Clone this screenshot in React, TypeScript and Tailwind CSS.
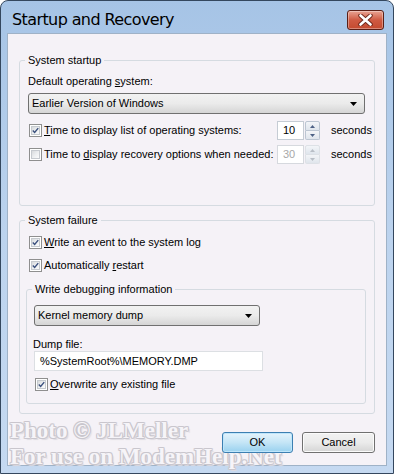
import React from "react";

const font = { fontFamily: '"Liberation Sans", Arial, sans-serif' };

function Check({ checked = false }: { checked?: boolean }) {
  return (
    <div className="w-[13px] h-[13px] border border-[#8f8f8f] bg-white p-[1px] shrink-0">
      <div className="w-full h-full bg-gradient-to-br from-[#d8dadc] via-[#eceef0] to-[#fbfbfb] border border-[#c6cacf] flex items-center justify-center">
        {checked && (
          <svg width="9" height="9" viewBox="0 0 9 9">
            <path d="M1 4.6 L3.4 7 L8 1.4" stroke="#3a4f7d" strokeWidth="1.8" fill="none" />
          </svg>
        )}
      </div>
    </div>
  );
}

function Combo({ text, w }: { text: string; w: string }) {
  return (
    <div className={`${w} h-[21px] rounded-[3px] border border-[#707070] bg-gradient-to-b from-[#f2f2f2] via-[#ebebeb] to-[#d5d5d5] flex items-center justify-between pl-[3px] pr-[7px]`}>
      <span className="text-[11px] text-black">{text}</span>
      <svg width="7" height="4" viewBox="0 0 7 4">
        <path d="M0 0 H7 L3.5 4 Z" fill="#000" />
      </svg>
    </div>
  );
}

function Spinner({ value, disabled = false }: { value: string; disabled?: boolean }) {
  const arrow = disabled ? "#b8bec6" : "#4d6185";
  return (
    <div className="flex h-[19px]">
      <div className={`w-[27px] h-full border ${disabled ? "border-[#d6d9de] text-[#a8a8a8]" : "border-[#c5ccd4] text-black"} bg-white text-[11px] flex items-center pl-[5px]`}>
        {value}
      </div>
      <div className="w-[15px] h-full flex flex-col ml-[1px]">
        <div className={`flex-1 border ${disabled ? "border-[#dde1e6]" : "border-[#bcc6d2]"} rounded-t-[2px] bg-gradient-to-b from-[#f3f5f8] to-[#dfe5ec] flex items-center justify-center`}>
          <svg width="5" height="3" viewBox="0 0 5 3"><path d="M0 3 H5 L2.5 0 Z" fill={arrow} /></svg>
        </div>
        <div className={`flex-1 border-x border-b ${disabled ? "border-[#dde1e6]" : "border-[#bcc6d2]"} rounded-b-[2px] bg-gradient-to-b from-[#f3f5f8] to-[#dfe5ec] flex items-center justify-center`}>
          <svg width="5" height="3" viewBox="0 0 5 3"><path d="M0 0 H5 L2.5 3 Z" fill={arrow} /></svg>
        </div>
      </div>
    </div>
  );
}

function Group({ label, className, children }: { label: string; className: string; children?: React.ReactNode }) {
  return (
    <div className={`relative border border-[#d5dbe1] rounded-[3px] ${className}`}>
      <span className="absolute -top-[8px] left-[5px] px-[3px] bg-[#f5f2f7] text-[11px] leading-[14px] text-black">{label}</span>
      {children}
    </div>
  );
}

export default function App() {
  const wmStyle: React.CSSProperties = {
    fontFamily: '"Liberation Serif", "Times New Roman", serif',
    color: "#f6f4f8",
    textShadow:
      "1px 0 0 #c9c6cd, -1px 0 0 #c9c6cd, 0 1px 0 #c9c6cd, 0 -1px 0 #c9c6cd, 1px 1px 0 #d4d1d8, -1px -1px 0 #d4d1d8, 1px -1px 0 #d4d1d8, -1px 1px 0 #d4d1d8, 2px 2px 1px #dedbe1",
  };
  return (
    <div className="w-[394px] h-[474px] bg-white" style={font}>
      <div className="relative w-[394px] h-[474px] rounded-t-[8px] border border-[#34475e] bg-gradient-to-b from-[#a6c4e6] via-[#bcd3ee] to-[#c5d9f1] flex flex-col">
        {/* Title bar */}
        <div className="h-[32px] flex items-start justify-between pl-[11px] pr-[9px]">
          <span className="mt-[9px] text-[16px] leading-[20px] text-black" style={{ fontFamily: '"DejaVu Sans", sans-serif', letterSpacing: "-0.6px" }}>
            Startup and Recovery
          </span>
          <div className="mt-[9px] w-[37px] h-[20px] rounded-[3px] border border-[#5b1f16] bg-gradient-to-b from-[#e8a393] via-[#cf5a42] to-[#c44a2f] flex items-center justify-center shadow-[inset_0_0_0_1px_rgba(255,255,255,0.35)]">
            <svg width="15" height="12" viewBox="0 0 15 12">
              <path d="M2.5 1.5 L12.5 10.5 M12.5 1.5 L2.5 10.5" stroke="#6a2418" strokeWidth="4.4" strokeLinecap="round" />
              <path d="M2.5 1.5 L12.5 10.5 M12.5 1.5 L2.5 10.5" stroke="#ffffff" strokeWidth="2.6" strokeLinecap="round" />
            </svg>
          </div>
        </div>

        {/* Content */}
        <div className="relative mx-[6px] h-[433px] border border-[#9fb2c7] bg-[#f5f2f7] flex flex-col text-[11px] text-black">
          {/* Watermark (behind controls) */}
          <div className="absolute left-[2px] top-[384px] pointer-events-none font-bold text-[23px] leading-[26px]" style={wmStyle}>
            <div>Photo © JLMeller</div>
            <div>For use on ModemHelp.Net</div>
          </div>

          {/* System startup */}
          <Group label="System startup" className="mt-[26px] ml-[11px] w-[356px] h-[146px] pl-[8px] pt-[13px] flex flex-col">
            <div className="leading-[14px]">Default operating <u>s</u>ystem:</div>
            <div className="mt-[5px]">
              <Combo text="Earlier Version of Windows" w="w-[337px]" />
            </div>
            <div className="mt-[7px] flex items-center h-[19px]">
              <div className="w-[249px] flex items-center pl-[1px]">
                <Check checked />
                <span className="ml-[2px]"><u>T</u>ime to display list of operating systems:</span>
              </div>
              <Spinner value="10" />
              <span className="ml-[11px]">seconds</span>
            </div>
            <div className="mt-[5px] flex items-center h-[19px]">
              <div className="w-[249px] flex items-center pl-[1px]">
                <Check />
                <span className="ml-[2px]">Time to <u>d</u>isplay recovery options when needed:</span>
              </div>
              <Spinner value="30" disabled />
              <span className="ml-[11px]">seconds</span>
            </div>
          </Group>

          {/* System failure */}
          <Group label="System failure" className="mt-[14px] ml-[11px] w-[356px] h-[194px] pt-[14px] flex flex-col">
            <div className="flex items-center h-[14px] pl-[9px]">
              <Check checked />
              <span className="ml-[2px]"><u>W</u>rite an event to the system log</span>
            </div>
            <div className="mt-[9px] flex items-center h-[14px] pl-[9px]">
              <Check checked />
              <span className="ml-[2px]">Automatically <u>r</u>estart</span>
            </div>
            <Group label="Write debugging information" className="mt-[17px] ml-[6px] w-[340px] h-[115px] pt-[15px] flex flex-col">
              <div className="ml-[7px]">
                <Combo text="Kernel memory dump" w="w-[226px]" />
              </div>
              <div className="mt-[11px] ml-[6px] leading-[14px]">Dump file:</div>
              <div className="ml-[7px] w-[229px] h-[20px] border border-[#dcdfe3] bg-white flex items-center pl-[5px]">
                %SystemRoot%\MEMORY.DMP
              </div>
              <div className="mt-[6px] ml-[8px] flex items-center h-[14px]">
                <Check checked />
                <span className="ml-[2px]"><u>O</u>verwrite any existing file</span>
              </div>
            </Group>
          </Group>

          {/* Buttons */}
          <div className="relative mt-[18px] flex justify-end pr-[11px] gap-[9px]">
            <div className="w-[71px] h-[21px] rounded-[3px] border border-[#3c7fb1] bg-gradient-to-b from-[#e5f4fc] via-[#c4e5f6] to-[#98d1ef] flex items-center justify-center shadow-[inset_0_0_0_1px_#bfe6fb]">
              OK
            </div>
            <div className="w-[73px] h-[21px] rounded-[3px] border border-[#707070] bg-gradient-to-b from-[#f2f2f2] via-[#ebebeb] to-[#d5d5d5] flex items-center justify-center shadow-[inset_0_0_0_1px_#fbfbfb]">
              Cancel
            </div>
          </div>
        </div>
      </div>
    </div>
  );
}
